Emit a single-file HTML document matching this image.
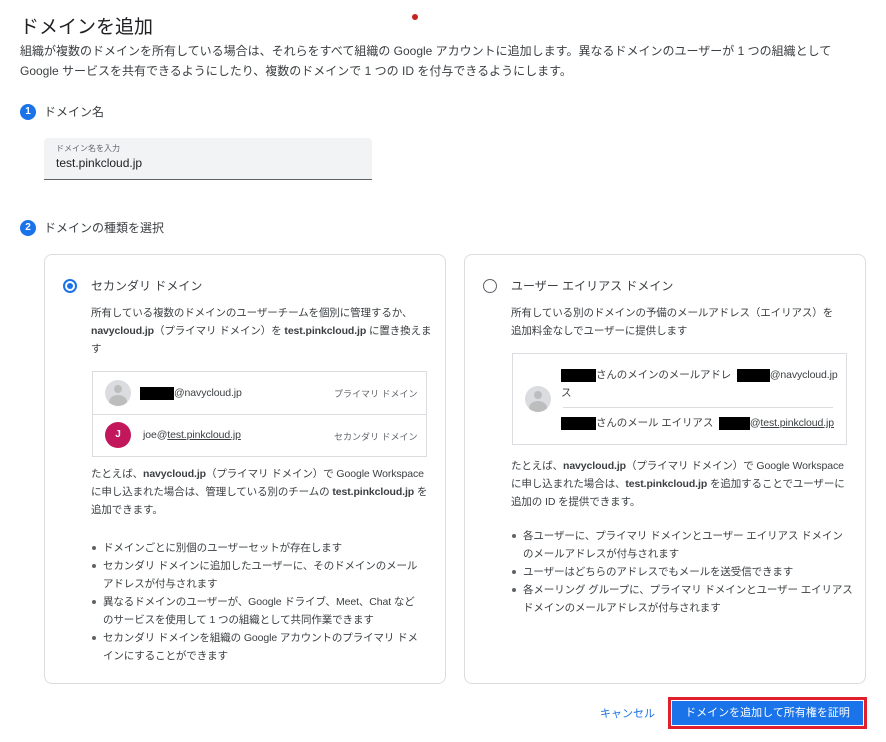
<!DOCTYPE html>
<html><head><meta charset="utf-8"><style>
*{margin:0;padding:0;box-sizing:border-box}
body{width:886px;height:742px;background:#fff;font-family:"Liberation Sans","Noto Sans CJK JP",sans-serif;color:#3c4043;position:relative;overflow:hidden}
.a{position:absolute;white-space:nowrap}
.s{font-size:10.5px;line-height:18px;color:#3c4043;letter-spacing:-0.1px}
.num{position:absolute;width:16px;height:16px;border-radius:50%;background:#1a73e8;color:#fff;font-size:10px;font-weight:bold;text-align:center;line-height:16px}
.card{position:absolute;border:1px solid #dadce0;border-radius:8px}
.box{position:absolute;border:1px solid #dadce0}
.blk{display:inline-block;background:#000;height:13px;vertical-align:middle}
ul{position:absolute;list-style:none}
ul li{font-size:10.5px;line-height:18px;padding-left:12px;position:relative;white-space:nowrap;letter-spacing:-0.1px}
ul li.b:before{content:"";position:absolute;left:1px;top:7px;width:4px;height:4px;border-radius:50%;background:#5f6368}
.av{position:absolute;width:26px;height:26px;border-radius:50%;background:#dadce0;overflow:hidden}
.av:before{content:"";position:absolute;left:9px;top:5px;width:8px;height:8px;border-radius:50%;background:#bdbdbd}
.av:after{content:"";position:absolute;left:4px;top:15px;width:18px;height:14px;border-radius:50%;background:#bdbdbd}
u{text-decoration:underline}
</style></head><body>
<div class="a" style="left:412px;top:14px;width:6px;height:6px;border-radius:50%;background:#c5221f"></div>
<div class="a" style="left:20px;top:15px;font-size:19px;line-height:26px;color:#202124">ドメインを追加</div>
<div class="a" style="left:20px;top:41px;font-size:12px;line-height:20px;color:#3c4043">組織が複数のドメインを所有している場合は、それらをすべて組織の Google アカウントに追加します。異なるドメインのユーザーが 1 つの組織として<br>Google サービスを共有できるようにしたり、複数のドメインで 1 つの ID を付与できるようにします。</div>
<div class="num" style="left:20px;top:104px">1</div>
<div class="a" style="left:44px;top:104px;font-size:12px;line-height:16px">ドメイン名</div>
<div class="a" style="left:44px;top:138px;width:328px;height:42px;background:#f1f3f4;border-bottom:1px solid #5f6368;border-radius:4px 4px 0 0"></div>
<div class="a" style="left:56px;top:143px;font-size:8px;color:#5f6368">ドメイン名を入力</div>
<div class="a" style="left:56px;top:156px;font-size:12px;color:#202124">test.pinkcloud.jp</div>
<div class="num" style="left:20px;top:220px">2</div>
<div class="a" style="left:44px;top:220px;font-size:12px;line-height:16px">ドメインの種類を選択</div>

<div class="card" style="left:44px;top:254px;width:402px;height:430px"></div>
<div class="a" style="left:63px;top:279px;width:14px;height:14px;border-radius:50%;border:2px solid #1a73e8"></div>
<div class="a" style="left:67px;top:283px;width:6px;height:6px;border-radius:50%;background:#1a73e8"></div>
<div class="a" style="left:91px;top:278px;font-size:12px;line-height:16px">セカンダリ ドメイン</div>
<div class="a s" style="left:91px;top:304px">所有している複数のドメインのユーザーチームを個別に管理するか、<br><b style="font-weight:600">navycloud.jp</b>（プライマリ ドメイン）を <b style="font-weight:600">test.pinkcloud.jp</b> に置き換えま<br>す</div>
<div class="box" style="left:92px;top:371px;width:335px;height:86px"></div>
<div class="a" style="left:92px;top:414px;width:335px;height:1px;background:#dadce0"></div>
<div class="av" style="left:105px;top:380px"></div>
<div class="a s" style="left:140px;top:384px"><span class="blk" style="width:34px"></span>@navycloud.jp</div>
<div class="a" style="left:334px;top:387px;font-size:9px;color:#5f6368">プライマリ ドメイン</div>
<div class="a" style="left:105px;top:422px;width:26px;height:26px;border-radius:50%;background:#c2185b;color:#fff;font-size:10px;font-weight:bold;text-align:center;line-height:26px">J</div>
<div class="a s" style="left:143px;top:426px">joe@<u>test.pinkcloud.jp</u></div>
<div class="a" style="left:334px;top:430px;font-size:9px;color:#5f6368">セカンダリ ドメイン</div>
<div class="a s" style="left:91px;top:465px">たとえば、<b style="font-weight:600">navycloud.jp</b>（プライマリ ドメイン）で Google Workspace<br>に申し込まれた場合は、管理している別のチームの <b style="font-weight:600">test.pinkcloud.jp</b> を<br>追加できます。</div>
<ul style="left:91px;top:539px">
<li class="b">ドメインごとに別個のユーザーセットが存在します</li>
<li class="b">セカンダリ ドメインに追加したユーザーに、そのドメインのメール</li>
<li>アドレスが付与されます</li>
<li class="b">異なるドメインのユーザーが、Google ドライブ、Meet、Chat など</li>
<li>のサービスを使用して 1 つの組織として共同作業できます</li>
<li class="b">セカンダリ ドメインを組織の Google アカウントのプライマリ ドメ</li>
<li>インにすることができます</li>
</ul>

<div class="card" style="left:464px;top:254px;width:402px;height:430px"></div>
<div class="a" style="left:483px;top:279px;width:14px;height:14px;border-radius:50%;border:1.5px solid #5f6368"></div>
<div class="a" style="left:511px;top:278px;font-size:12px;line-height:16px">ユーザー エイリアス ドメイン</div>
<div class="a s" style="left:511px;top:304px">所有している別のドメインの予備のメールアドレス（エイリアス）を<br>追加料金なしでユーザーに提供します</div>
<div class="box" style="left:512px;top:353px;width:335px;height:92px"></div>
<div class="a" style="left:563px;top:407px;width:270px;height:1px;background:#dadce0"></div>
<div class="av" style="left:525px;top:386px"></div>
<div class="a s" style="left:561px;top:366px"><span class="blk" style="width:35px"></span>さんのメインのメールアドレ&nbsp;&nbsp;<span class="blk" style="width:33px"></span>@navycloud.jp<br>ス</div>
<div class="a s" style="left:561px;top:414px"><span class="blk" style="width:35px"></span>さんのメール エイリアス&nbsp;&nbsp;<span class="blk" style="width:31px"></span>@<u>test.pinkcloud.jp</u></div>
<div class="a s" style="left:511px;top:457px">たとえば、<b style="font-weight:600">navycloud.jp</b>（プライマリ ドメイン）で Google Workspace<br>に申し込まれた場合は、<b style="font-weight:600">test.pinkcloud.jp</b> を追加することでユーザーに<br>追加の ID を提供できます。</div>
<ul style="left:511px;top:527px">
<li class="b">各ユーザーに、プライマリ ドメインとユーザー エイリアス ドメイン</li>
<li>のメールアドレスが付与されます</li>
<li class="b">ユーザーはどちらのアドレスでもメールを送受信できます</li>
<li class="b">各メーリング グループに、プライマリ ドメインとユーザー エイリアス</li>
<li>ドメインのメールアドレスが付与されます</li>
</ul>

<div class="a" style="left:600px;top:705px;font-size:11px;color:#1a73e8">キャンセル</div>
<div class="a" style="left:668px;top:697px;width:199px;height:32px;border:3px solid #e0202a"></div>
<div class="a" style="left:672px;top:701px;width:191px;height:24px;background:#1a73e8;color:#fff;font-size:11px;text-align:center;line-height:24px">ドメインを追加して所有権を証明</div>
</body></html>
